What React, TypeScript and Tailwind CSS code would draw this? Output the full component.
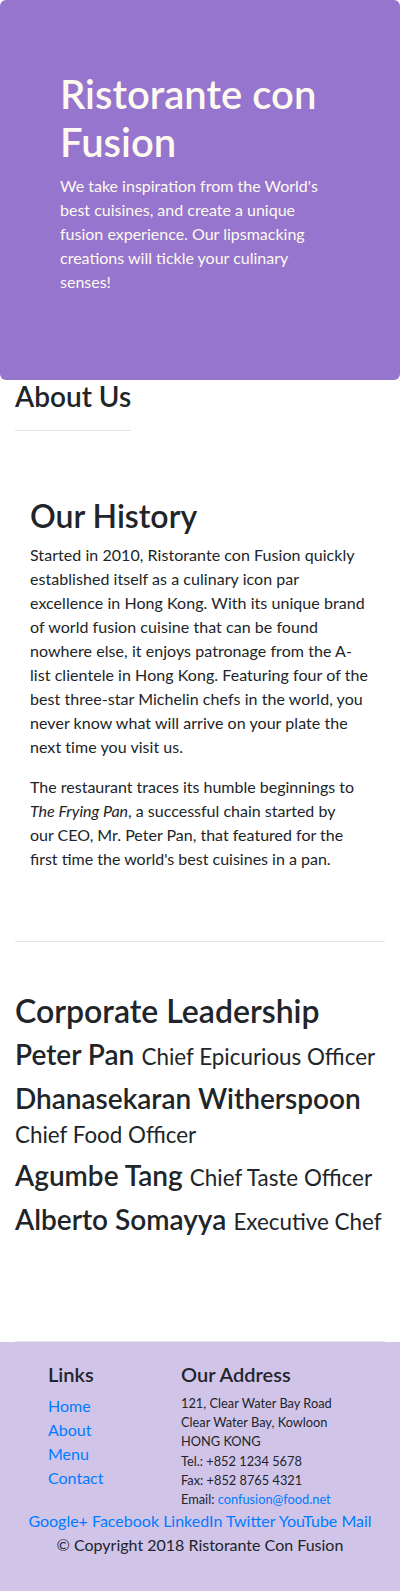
import React from 'react';

const font = { fontFamily: '"Segoe UI", Lato, "Noto Sans", sans-serif' };

const leaders = [
	{ name: 'Peter Pan', title: 'Chief Epicurious Officer' },
	{ name: 'Dhanasekaran Witherspoon', title: 'Chief Food Officer' },
	{ name: 'Agumbe Tang', title: 'Chief Taste Officer' },
	{ name: 'Alberto Somayya', title: 'Executive Chef' },
];

const Jumbotron = () => (
	<header className="bg-[#9575cd] text-[#fffaf0] rounded-md pt-[70px] pb-[70px] px-[60px]">
		<h1 className="text-[40px] leading-[48px] font-semibold mb-2">Ristorante con Fusion</h1>
		<p className="text-base leading-6 mb-4">
			We take inspiration from the World's best cuisines, and create a unique fusion experience. Our lipsmacking
			creations will tickle your culinary senses!
		</p>
	</header>
);

const Footer = () => (
	<footer className="bg-[#d1c4e9] pt-5 pb-5">
		<div className="flex">
			<div className="ml-[33px] w-[133px] px-[15px]">
				<h5 className="text-xl leading-6 font-semibold mb-2 text-[#212529]">Links</h5>
				<ul className="text-base leading-6 text-[#007bff]">
					<li>Home</li>
					<li>About</li>
					<li>Menu</li>
					<li>Contact</li>
				</ul>
			</div>
			<div className="px-[15px] flex-1">
				<h5 className="text-xl leading-6 font-semibold mb-2 text-[#212529]">Our Address</h5>
				<address className="not-italic text-[12.8px] leading-[19.2px] text-[#212529]">
					121, Clear Water Bay Road
					<br />
					Clear Water Bay, Kowloon
					<br />
					HONG KONG
					<br />
					Tel.: +852 1234 5678
					<br />
					Fax: +852 8765 4321
					<br />
					Email: <span className="text-[#007bff]">confusion@food.net</span>
				</address>
			</div>
		</div>
		<div className="text-center text-base leading-6 text-[#007bff]">
			Google+ Facebook LinkedIn Twitter YouTube Mail
		</div>
		<p className="text-center text-base leading-6 text-[#212529] mb-4">© Copyright 2018 Ristorante Con Fusion</p>
	</footer>
);

export default function App() {
	return (
		<div className="w-[400px] bg-white text-[#212529]" style={font}>
			<Jumbotron />
			<div className="px-[15px]">
				<div className="w-fit">
					<h3 className="text-[28px] leading-[33.6px] font-semibold">About Us</h3>
					<hr className="mt-4 mb-4 border-t border-black/10" />
				</div>

				{/* history */}
				<div className="pt-[50px] pb-[54px] border-b border-black/10">
					<div className="px-[15px]">
						<h2 className="text-[32px] leading-[38.4px] font-semibold mb-2">Our History</h2>
						<p className="text-base leading-6 mb-4 tracking-[0.05px]">
							Started in 2010, Ristorante con Fusion quickly established itself as a culinary icon par excellence in
							Hong Kong. With its unique brand of world fusion cuisine that can be found nowhere else, it enjoys
							patronage from the A-list clientele in Hong Kong. Featuring four of the best three-star Michelin chefs in
							the world, you never know what will arrive on your plate the next time you visit us.
						</p>
						<p className="text-base leading-6 mb-4 mr-[8px]">
							The restaurant traces its humble beginnings to <em>The Frying Pan</em>, a successful chain started by our
							CEO, Mr. Peter Pan, that featured for the first time the world's best cuisines in a pan.
						</p>
					</div>
				</div>

				{/* leadership */}
				<div className="pt-[50px] pb-[50px] min-h-[400px] border-b border-black/10">
					<h2 className="text-[32px] leading-[38.4px] font-semibold mb-2">Corporate Leadership</h2>
					{leaders.map((l) => (
						<h3 key={l.name} className="text-[28px] leading-[33.6px] mb-2">
							<span className="font-semibold">{l.name}</span> <small className="text-[80%] font-normal">{l.title}</small>
						</h3>
					))}
				</div>
			</div>
			<Footer />
		</div>
	);
}
